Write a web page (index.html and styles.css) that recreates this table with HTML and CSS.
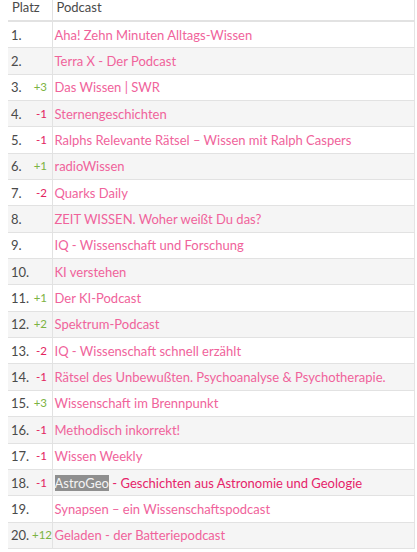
FILE: index.html
```html
<!DOCTYPE html>
<html lang="de">
<head>
<meta charset="utf-8">
<link rel="stylesheet" href="styles.css">
</head>
<body>
<table class="chart">
  <thead>
    <tr><th class="c-rank">Platz</th><th class="c-name">Podcast</th></tr>
  </thead>
  <tbody>
    <tr><td class="c-rank"><span class="num">1.</span></td><td class="c-name"><a>Aha! Zehn Minuten Alltags-Wissen</a></td></tr>
    <tr><td class="c-rank"><span class="num">2.</span></td><td class="c-name"><a>Terra X - Der Podcast</a></td></tr>
    <tr><td class="c-rank"><span class="num">3.</span><span class="chg up">+3</span></td><td class="c-name"><a>Das Wissen | SWR</a></td></tr>
    <tr><td class="c-rank"><span class="num">4.</span><span class="chg down">-1</span></td><td class="c-name"><a>Sternengeschichten</a></td></tr>
    <tr><td class="c-rank"><span class="num">5.</span><span class="chg down">-1</span></td><td class="c-name"><a>Ralphs Relevante Rätsel – Wissen mit Ralph Caspers</a></td></tr>
    <tr><td class="c-rank"><span class="num">6.</span><span class="chg up">+1</span></td><td class="c-name"><a>radioWissen</a></td></tr>
    <tr><td class="c-rank"><span class="num">7.</span><span class="chg down">-2</span></td><td class="c-name"><a>Quarks Daily</a></td></tr>
    <tr><td class="c-rank"><span class="num">8.</span></td><td class="c-name"><a>ZEIT WISSEN. Woher weißt Du das?</a></td></tr>
    <tr><td class="c-rank"><span class="num">9.</span></td><td class="c-name"><a>IQ - Wissenschaft und Forschung</a></td></tr>
    <tr><td class="c-rank"><span class="num">10.</span></td><td class="c-name"><a>KI verstehen</a></td></tr>
    <tr><td class="c-rank"><span class="num">11.</span><span class="chg up">+1</span></td><td class="c-name"><a>Der KI-Podcast</a></td></tr>
    <tr><td class="c-rank"><span class="num">12.</span><span class="chg up">+2</span></td><td class="c-name"><a>Spektrum-Podcast</a></td></tr>
    <tr><td class="c-rank"><span class="num">13.</span><span class="chg down">-2</span></td><td class="c-name"><a>IQ - Wissenschaft schnell erzählt</a></td></tr>
    <tr><td class="c-rank"><span class="num">14.</span><span class="chg down">-1</span></td><td class="c-name"><a>Rätsel des Unbewußten. Psychoanalyse &amp; Psychotherapie.</a></td></tr>
    <tr><td class="c-rank"><span class="num">15.</span><span class="chg up">+3</span></td><td class="c-name"><a>Wissenschaft im Brennpunkt</a></td></tr>
    <tr><td class="c-rank"><span class="num">16.</span><span class="chg down">-1</span></td><td class="c-name"><a>Methodisch inkorrekt!</a></td></tr>
    <tr><td class="c-rank"><span class="num">17.</span><span class="chg down">-1</span></td><td class="c-name"><a>Wissen Weekly</a></td></tr>
    <tr><td class="c-rank"><span class="num">18.</span><span class="chg down">-1</span></td><td class="c-name"><a class="strong"><span class="hl">AstroGeo</span> - Geschichten aus Astronomie und Geologie</a></td></tr>
    <tr><td class="c-rank"><span class="num">19.</span></td><td class="c-name"><a>Synapsen – ein Wissenschaftspodcast</a></td></tr>
    <tr><td class="c-rank"><span class="num">20.</span><span class="chg up">+12</span></td><td class="c-name"><a>Geladen - der Batteriepodcast</a></td></tr>
  </tbody>
</table>
</body>
</html>
```
FILE: styles.css
```css
html, body {
  margin: 0;
  padding: 0;
  background: #ffffff;
}
body {
  padding: 0 0 0 8px;
  font-family: "Lato", "Noto Sans", sans-serif;
  font-size: 13px;
  color: #4a4a4a;
}
.chart {
  width: 407px;
  border-collapse: collapse;
  table-layout: fixed;
  border-right: 1px solid #e4e4e4;
}
.chart th {
  font-weight: normal;
  text-align: left;
  height: 20px;
  padding: 0 0 0 4px;
  line-height: 15px;
  vertical-align: top;
  color: #4a4a4a;
  border-bottom: 2px solid #e2e2e2;
}
.chart td {
  height: 25.35px;
  padding: 0 0 0 3px;
  border-bottom: 1px solid #e2e2e2;
  vertical-align: middle;
  white-space: nowrap;
}
.chart tbody tr:nth-child(even) td {
  background: #f5f5f5;
}
.chart .c-rank {
  box-sizing: border-box;
  width: 44px;
  border-right: 1px solid #e2e2e2;
}
.num {
  display: inline-block;
  width: 21px;
  color: #4a4a4a;
}
.chg {
  display: inline-block;
  width: 15px;
  text-align: right;
  font-size: 11.5px;
  vertical-align: 1px;
}
.up { color: #7cb342; }
.down { color: #e3245f; }
.chart td.c-name {
  padding-left: 2px;
}
.c-name a {
  color: #f0639b;
  text-decoration: none;
}
.c-name a.strong {
  color: #e6246a;
}
.hl {
  background: #8f8f8f;
  color: #f4f4f4;
}
```
